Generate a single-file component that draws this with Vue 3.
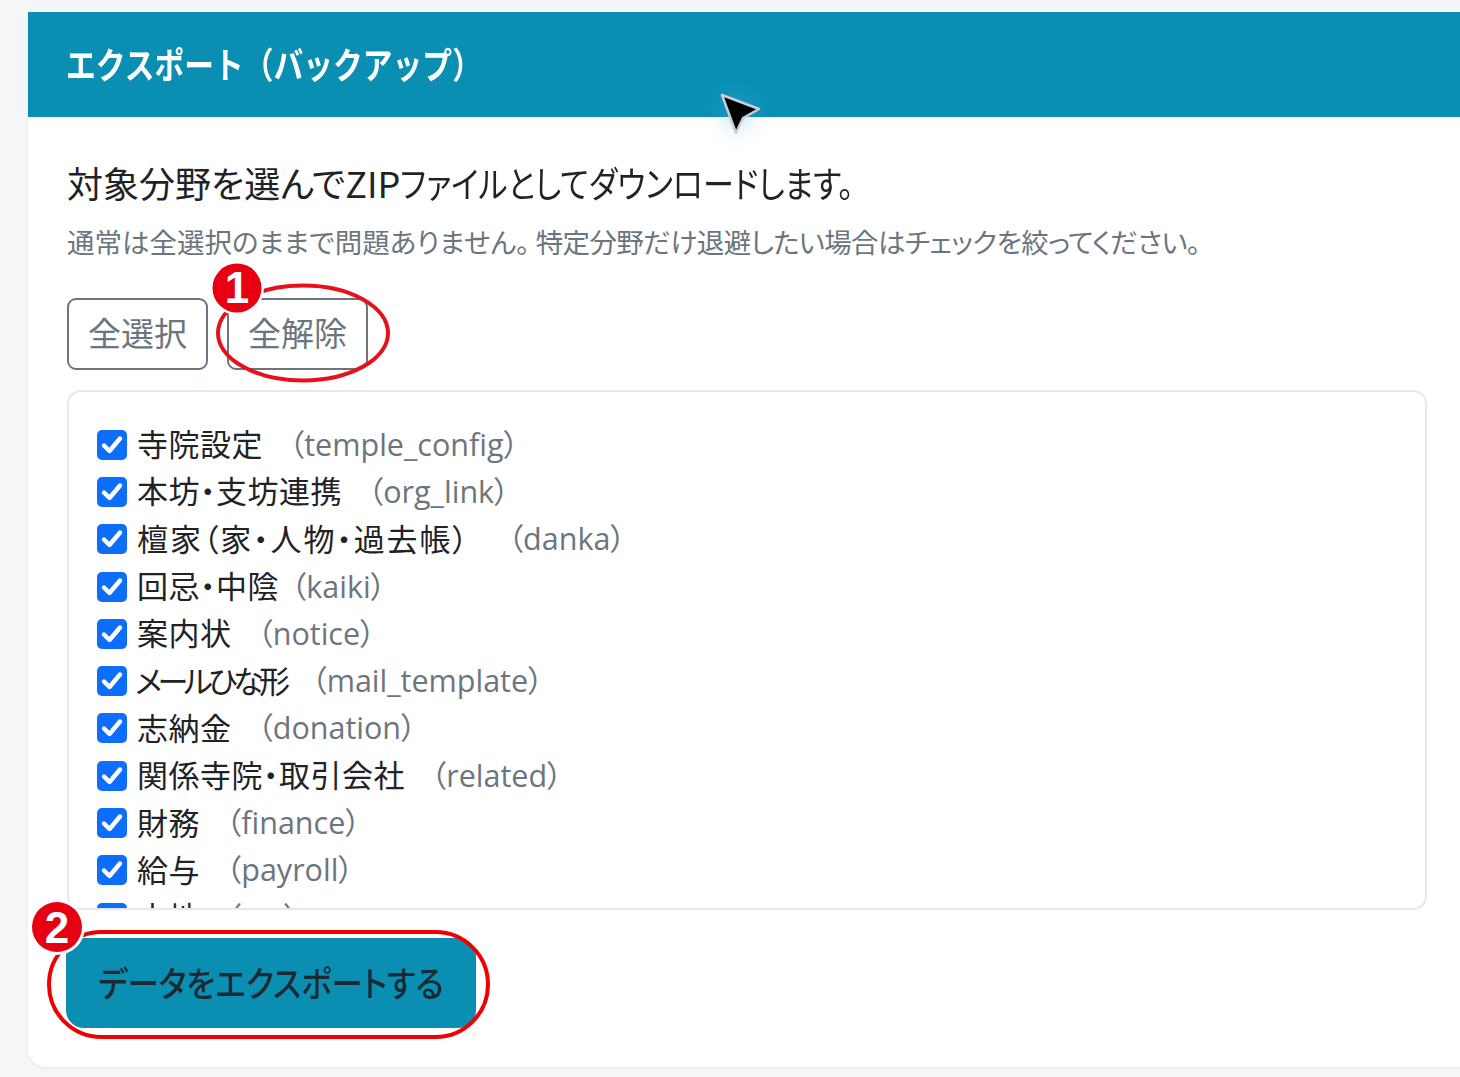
<script setup>
const items = [
  ['寺院設定', 'temple_config', ''],
  ['本坊・支坊連携', 'org_link', ''],
  ['檀家（家・人物・過去帳）', 'danka', 'wide'],
  ['回忌・中陰', 'kaiki', 'near'],
  ['案内状', 'notice', ''],
  ['メールひな形', 'mail_template', 'kata'],
  ['志納金', 'donation', ''],
  ['関係寺院・取引会社', 'related', ''],
  ['財務', 'finance', ''],
  ['給与', 'payroll', ''],
  ['土地', 'etc', ''],
]
</script>

<template>
  <div class="page">
    <section class="card">
      <header class="card-head"><span class="title">エクスポート（バックアップ）</span></header>
      <div class="card-body">
        <p class="lead">対象分野を選んでZIP<span class="narrow">ファイルとしてダウンロードします。</span></p>
        <p class="sub">通常は全選択のままで問題ありません。<span class="sub-tail">特定分野だけ退避したい場合はチェックを絞ってください。</span></p>
        <div class="btns">
          <button class="outline">全選択</button>
          <button class="outline">全解除</button>
        </div>
        <div class="list">
          <label v-for="it in items" :key="it[1]" class="row" :class="it[2]">
            <span class="check">
              <svg viewBox="0 0 30 30" width="30" height="30"><path d="M7 15.5l5.5 5.5 10.5-12.5" fill="none" stroke="#fff" stroke-width="4.4" stroke-linecap="round" stroke-linejoin="round"/></svg>
            </span>
            <span class="name">{{ it[0] }}</span>
            <span class="code">（{{ it[1] }}）</span>
          </label>
        </div>
        <button class="primary"><span class="primary-label">データをエクスポートする</span></button>
      </div>
    </section>

    <svg class="overlay" viewBox="0 0 1460 1077" width="1460" height="1077">
      <defs>
        <filter id="glow" x="-150%" y="-150%" width="400%" height="400%"><feGaussianBlur stdDeviation="11"/></filter>
      </defs>
      <ellipse cx="303" cy="333" rx="85" ry="47.5" fill="none" stroke="#e8101a" stroke-width="4"/>
      <rect x="49" y="932" width="439" height="105" rx="52.5" fill="none" stroke="#f00000" stroke-width="4"/>
      <circle cx="237" cy="288" r="27" fill="#fff"/>
      <circle cx="237" cy="288" r="24.5" fill="#e60012"/>
      <text x="237" y="303" class="num num1">1</text>
      <circle cx="57" cy="927" r="28" fill="#fff"/>
      <circle cx="57" cy="927" r="25" fill="#e60012"/>
      <text x="57" y="943" class="num">2</text>
      <path d="M724 98l34 12-16 8-7 15z" fill="#5aaef0" opacity=".6" filter="url(#glow)"/>
      <path d="M722 95l37 14-16 9-7 15z" fill="#000" stroke="#c9ced2" stroke-width="2.5" stroke-linejoin="round"/>
    </svg>
  </div>
</template>

<style scoped>
.page {
  position: relative;
  width: 1460px;
  height: 1077px;
  overflow: hidden;
  padding: 12px 0 0 28px;
  box-sizing: border-box;
  background: #f4f6f8;
  font-family: "Noto Sans CJK JP", "Noto Sans", sans-serif;
  font-feature-settings: "palt";
}
.card {
  width: 1432px;
  height: 1055px;
  background: #fff;
  border-radius: 0 0 0 18px;
  box-shadow: 0 1px 3px rgba(0, 0, 0, .08);
}
.card-head {
  height: 105px;
  box-sizing: border-box;
  padding: 23px 0 0 38px;
  background: #0a8fb3;
  color: #fff;
  font-size: 36px;
  font-weight: 700;
  line-height: 56px;
}
.title {
  display: inline-block;
  font-feature-settings: normal;
  white-space: nowrap;
  transform: scaleX(.827);
  transform-origin: left center;
}
.card-body {
  padding: 40px 33px 0 39px;
}
.lead {
  margin: 0;
  font-size: 36px;
  line-height: 50px;
  color: #1f2326;
}
.narrow {
  display: inline-block;
  white-space: nowrap;
  transform: scaleX(.863);
  transform-origin: left center;
}
.sub {
  margin: 14px 0 0;
  font-size: 27.5px;
  line-height: 40px;
  color: #6c757d;
}
.sub-tail {
  margin-left: 6px;
  letter-spacing: -.6px;
}
.btns {
  display: flex;
  gap: 19px;
  margin-top: 37px;
}
.outline {
  width: 141px;
  height: 72px;
  padding: 0 0 4px;
  background: #fff;
  border: 2.5px solid #6c757d;
  border-radius: 9px;
  color: #6c757d;
  font: inherit;
  font-size: 33px;
}
.list {
  margin-top: 20px;
  height: 520px;
  box-sizing: border-box;
  padding: 29px 0 0 28px;
  overflow: hidden;
  border: 2px solid #e6e8eb;
  border-radius: 14px;
}
.row {
  display: flex;
  align-items: center;
  height: 47.3px;
  font-size: 31px;
}
.check {
  display: flex;
  flex: none;
  width: 30px;
  height: 30px;
  margin-right: 10px;
  border-radius: 5px;
  background: #0d6efd;
}
.name {
  padding-bottom: 4px;
  color: #1f2326;
  letter-spacing: .5px;
}
.code {
  margin-left: 26px;
  padding-bottom: 4px;
  color: #6c757d;
  font-family: "Open Sans", "Noto Sans CJK JP", sans-serif;
  font-size: 30.5px;
}
.wide .name {
  letter-spacing: 1.9px;
}
.wide .code {
  margin-left: 38px;
}
.near .code {
  margin-left: 12px;
}
.kata .name {
  margin-left: -2px;
  letter-spacing: -4.5px;
}
.primary {
  display: block;
  width: 410px;
  height: 90px;
  margin: 28px 0 0 -1px;
  padding: 0 0 4px;
  border: 0;
  border-radius: 18px;
  background: #0a8fb3;
  color: #1a2a33;
  font: inherit;
  font-size: 35px;
  font-weight: 500;
}
.primary-label {
  display: inline-block;
  white-space: nowrap;
  transform: scaleX(.9);
}
.overlay {
  position: absolute;
  top: 0;
  left: 0;
  pointer-events: none;
}
.num {
  fill: #fff;
  font-family: "Liberation Sans", sans-serif;
  font-weight: 700;
  font-size: 44px;
  text-anchor: middle;
}
</style>

<style>
html, body { margin: 0; background: #f4f6f8; }
</style>
